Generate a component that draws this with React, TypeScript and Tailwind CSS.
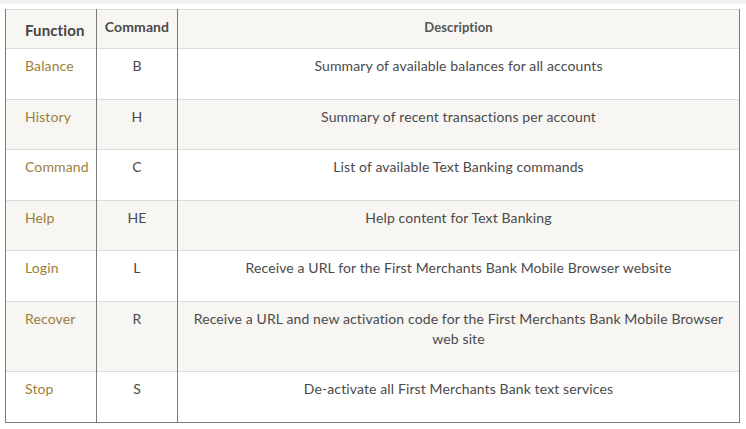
const rows = [
  { fn: "Balance", cmd: "B", desc: "Summary of available balances for all accounts" },
  { fn: "History", cmd: "H", desc: "Summary of recent transactions per account" },
  { fn: "Command", cmd: "C", desc: "List of available Text Banking commands" },
  { fn: "Help", cmd: "HE", desc: "Help content for Text Banking" },
  { fn: "Login", cmd: "L", desc: "Receive a URL for the First Merchants Bank Mobile Browser website" },
  {
    fn: "Recover",
    cmd: "R",
    desc: "Receive a URL and new activation code for the First Merchants Bank Mobile Browser web site",
  },
  { fn: "Stop", cmd: "S", desc: "De-activate all First Merchants Bank text services" },
];

const App = () => {
  return (
    <div className="w-[746px] h-[429px] bg-white font-['Lato',sans-serif] text-[#4a4a4a]">
      <div className="h-[4px] bg-[#f1f1f1]" />
      <div className="pt-[5px] pl-[5px]">
        <table className="w-[735px] border-collapse table-fixed text-[14px] leading-[20px] tracking-[0.12px]">
          <colgroup>
            <col className="w-[91px]" />
            <col className="w-[81px]" />
            <col />
          </colgroup>
          <thead>
            <tr className="bg-[#f7f6f3] h-[39px] border-t border-[#dcdcdc]">
              <th className="border-l border-r border-l-[#7a7a7a] border-r-[#7a7a7a] text-left pl-[19px] pt-[1px] text-[15px] font-bold text-[#444]">
                Function
              </th>
              <th className="border-r border-r-[#7a7a7a] text-center pb-[4px] text-[14px] font-bold text-[#4a4a4a]">
                Command
              </th>
              <th className="border-r border-r-[#7a7a7a] text-center pb-[4px] text-[13px] font-bold text-[#555]">
                Description
              </th>
            </tr>
          </thead>
          <tbody>
            {rows.map((r, i) => (
              <tr
                key={r.fn}
                className={`border-t border-[#dcdcdc] ${i % 2 === 1 ? "bg-[#f7f6f3]" : "bg-white"} ${
                  i === rows.length - 1 ? "border-b border-b-[#7a7a7a]" : ""
                }`}
              >
                <td className="align-top border-l border-r border-l-[#7a7a7a] border-r-[#7a7a7a] pl-[19px] pt-[7px] pb-[22.5px] text-[#9b7f3c]">
                  {r.fn}
                </td>
                <td className="align-top border-r border-r-[#7a7a7a] text-center pt-[7px] pb-[22.5px]">{r.cmd}</td>
                <td className="align-top border-r border-r-[#7a7a7a] text-center pt-[7px] pb-[22.5px] px-[12px]">
                  {r.desc}
                </td>
              </tr>
            ))}
          </tbody>
        </table>
      </div>
    </div>
  );
};

export default App;
